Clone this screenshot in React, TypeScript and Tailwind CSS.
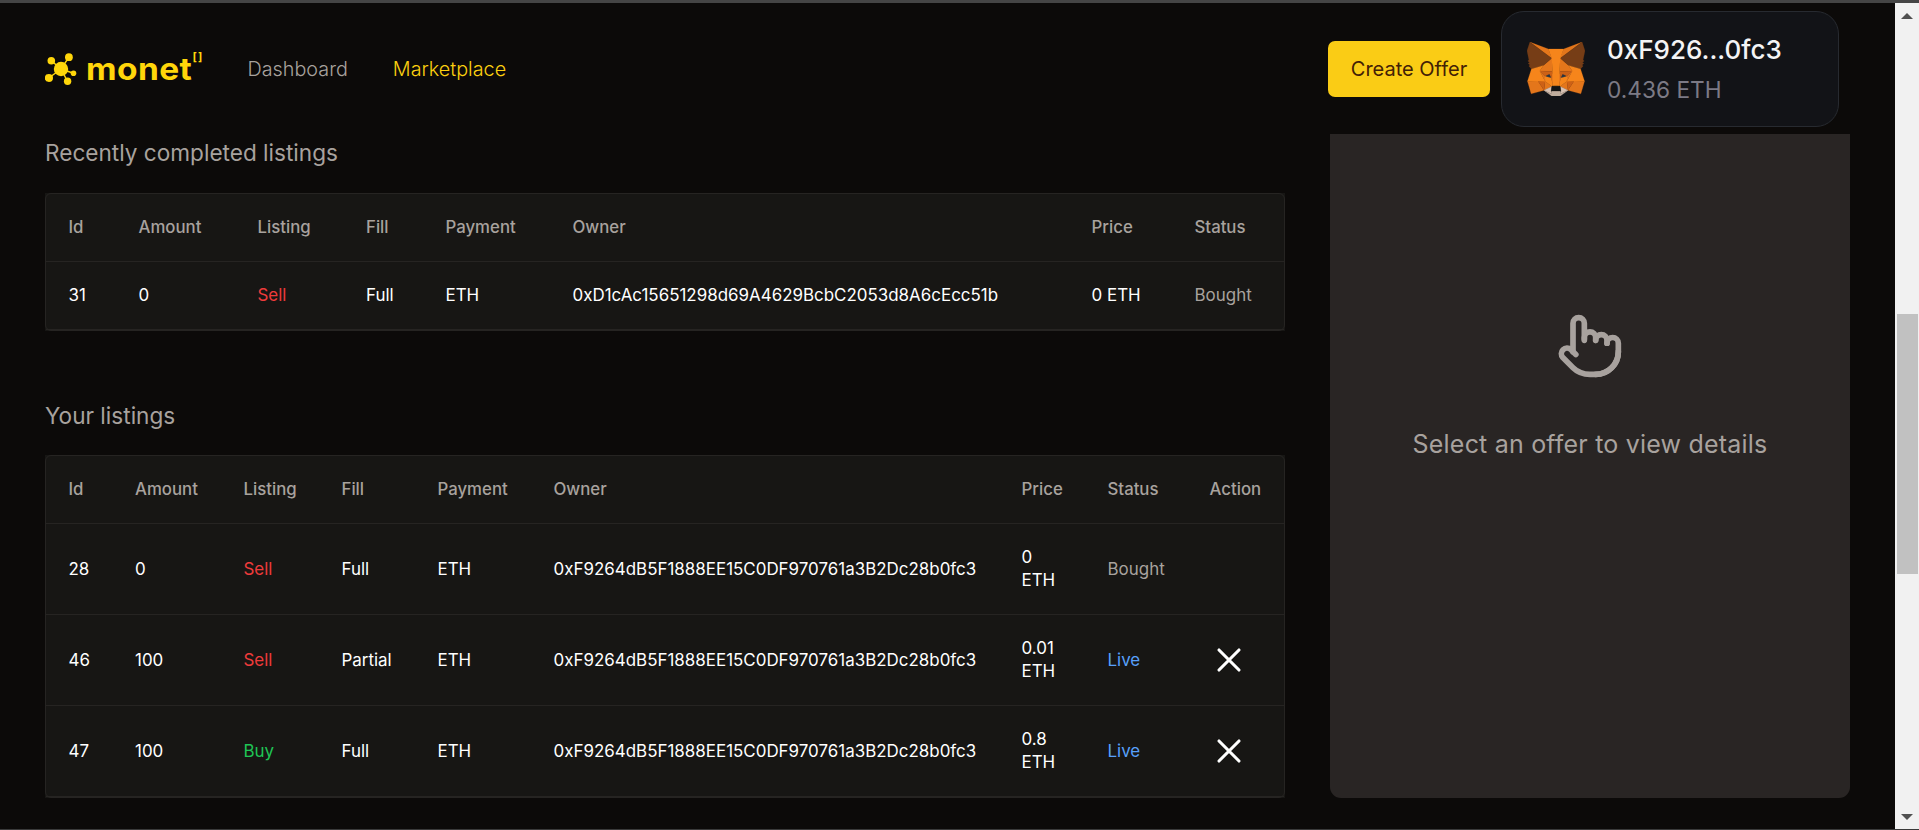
import type { ReactNode } from "react";
import { Pointer } from "lucide-react";

type Listing = {
  id: number;
  amount: number;
  side: "Sell" | "Buy";
  fill: string;
  owner: string;
  price: string;
  status: "Bought" | "Live";
};

const MY_ADDRESS = "0xF9264dB5F1888EE15C0DF970761a3B2Dc28b0fc3";

const completed: Listing[] = [
  { id: 31, amount: 0, side: "Sell", fill: "Full", owner: "0xD1cAc15651298d69A4629BcbC2053d8A6cEcc51b", price: "0", status: "Bought" },
];

const mine: Listing[] = [
  { id: 28, amount: 0, side: "Sell", fill: "Full", owner: MY_ADDRESS, price: "0", status: "Bought" },
  { id: 46, amount: 100, side: "Sell", fill: "Partial", owner: MY_ADDRESS, price: "0.01", status: "Live" },
  { id: 47, amount: 100, side: "Buy", fill: "Full", owner: MY_ADDRESS, price: "0.8", status: "Live" },
];

const foxFacets: [string, string[]][] = [
  ["#E2761B", ["274.1,35.5 174.6,109.4 193,65.8"]],
  ["#E4761B", [
    "44.4,35.5 143.1,110.1 125.6,65.8",
    "238.3,206.8 211.8,247.4 268.5,263 284.8,207.7",
    "33.9,207.7 50.1,263 106.8,247.4 80.3,206.8",
    "103.6,138.2 87.8,162.1 144.1,164.6 142.1,104.1",
    "214.9,138.2 175.9,103.4 174.6,164.6 230.8,162.1",
    "106.8,247.4 140.6,230.9 111.4,208.1",
    "177.9,230.9 211.8,247.4 207.1,208.1",
  ]],
  ["#D7C1B3", [
    "211.8,247.4 177.9,230.9 180.6,253 180.3,262.3",
    "106.8,247.4 138.3,262.3 138.1,253 140.6,230.9",
  ]],
  ["#233447", [
    "138.8,193.5 110.6,185.2 130.5,176.1",
    "179.7,193.5 188,176.1 208,185.2",
  ]],
  ["#CD6116", [
    "106.8,247.4 111.6,206.8 80.3,207.7",
    "207,206.8 211.8,247.4 238.3,207.7",
    "230.8,162.1 174.6,164.6 179.8,193.5 188.1,176.1 208.1,185.2",
    "110.6,185.2 130.6,176.1 138.8,193.5 144.1,164.6 87.8,162.1",
  ]],
  ["#E4751F", [
    "87.8,162.1 111.4,208.1 110.6,185.2",
    "208.1,185.2 207.1,208.1 230.8,162.1",
    "144.1,164.6 138.8,193.5 145.4,227.6 146.9,182.7",
    "174.6,164.6 171.9,182.6 173.1,227.6 179.8,193.5",
  ]],
  ["#F6851B", [
    "179.8,193.5 173.1,227.6 177.9,230.9 207.1,208.1 208.1,185.2",
    "110.6,185.2 111.4,208.1 140.6,230.9 145.4,227.6 138.8,193.5",
  ]],
  ["#C0AD9E", ["180.3,262.3 180.6,253 178.1,250.8 140.4,250.8 138.1,253 138.3,262.3 106.8,247.4 117.8,256.4 140.1,271.9 178.4,271.9 200.8,256.4 211.8,247.4"]],
  ["#161616", ["177.9,230.9 173.1,227.6 145.4,227.6 140.6,230.9 138.1,253 140.4,250.8 178.1,250.8 180.6,253"]],
  ["#763D16", [
    "278.3,114.2 286.8,73.4 274.1,35.5 177.9,106.9 214.9,138.2 267.2,153.5 278.8,140 273.8,136.4 281.8,129.1 275.6,124.3 283.6,118.2",
    "31.8,73.4 40.3,114.2 34.9,118.2 42.9,124.3 36.8,129.1 44.8,136.4 39.8,140 51.3,153.5 103.6,138.2 140.6,106.9 44.4,35.5",
  ]],
  ["#F6851B", [
    "267.2,153.5 214.9,138.2 230.8,162.1 207.1,208.1 238.3,207.7 284.8,207.7",
    "103.6,138.2 51.3,153.5 33.9,207.7 80.3,207.7 111.4,208.1 87.8,162.1",
    "174.6,164.6 177.9,106.9 193.1,65.8 125.6,65.8 140.6,106.9 144.1,164.6 145.3,182.8 145.4,227.6 173.1,227.6 173.3,182.8",
  ]],
];

function Fox() {
  return (
    <svg viewBox="31.8 35.5 255 236.4" className="h-[54px] w-[58px] shrink-0" aria-hidden="true">
      {foxFacets.map(([fill, shapes]) =>
        shapes.map((points) => (
          <polygon key={fill + points} points={points} fill={fill} stroke={fill} strokeLinejoin="round" />
        )),
      )}
    </svg>
  );
}

function Logo() {
  return (
    <a className="flex items-center text-[#ffd60a]">
      <svg viewBox="0 0 32 32" className="h-8 w-8 shrink-0" fill="currentColor" stroke="currentColor" aria-hidden="true">
        <path d="M16 16 6.3 7.7M16 16 23.8 4.3M16 16 3.8 25M16 16 28.5 20.3M16 16 22.6 28.5" strokeWidth="1.5" />
        <g stroke="none">
          <circle cx="16" cy="16" r="7.2" />
          <circle cx="6.3" cy="7.7" r="3.8" />
          <circle cx="23.9" cy="4.2" r="3.9" />
          <circle cx="3.9" cy="25" r="4.1" />
          <circle cx="28.5" cy="20.3" r="2.8" />
          <circle cx="22.6" cy="28.3" r="3.7" />
        </g>
      </svg>
      <span className="ml-[9px] w-[106.5px] origin-left scale-x-[1.08] text-[31px] leading-8 font-bold tracking-[0.4px]">monet</span>
      <span className="mb-[22px] text-[11.5px] leading-none font-bold tracking-[1.2px]">[]</span>
    </a>
  );
}

function CloseIcon() {
  return (
    <svg viewBox="0 0 24 24" className="-ml-[1px] size-10" fill="none" stroke="currentColor" strokeWidth="1.9" strokeLinecap="round">
      <path d="M6 18 18 6M6 6l12 12" />
    </svg>
  );
}

function Cell({ children, className = "" }: { children?: ReactNode; className?: string }) {
  return <div className={`flex items-center pl-[22.5px] ${className}`}>{children}</div>;
}

function ListingTable({ rows, columns, rowHeight, withAction = false }: {
  rows: Listing[];
  columns: string;
  rowHeight: string;
  withAction?: boolean;
}) {
  const headings = ["Id", "Amount", "Listing", "Fill", "Payment", "Owner", "Price", "Status"];
  if (withAction) headings.push("Action");
  return (
    <div className="w-[1240px] bg-[#171614]">
      <div className="rounded-md border border-[#262422] text-[16.95px] leading-[23px] text-white">
        <div className={`grid h-[68px] border-b border-[#262422] text-[16.8px] font-medium text-[#a8a29e] ${columns}`}>
          {headings.map((h) => <Cell key={h}>{h}</Cell>)}
        </div>
        {rows.map((row) => (
          <div key={row.id} className={`grid border-b border-[#262422] ${rowHeight} ${columns}`}>
            <Cell>{row.id}</Cell>
            <Cell>{row.amount}</Cell>
            <Cell className={row.side === "Sell" ? "text-[#ee3b3b]" : "text-[#1fc455]"}>{row.side}</Cell>
            <Cell>{row.fill}</Cell>
            <Cell>ETH</Cell>
            <Cell>{row.owner}</Cell>
            <Cell className="pr-[22px]">{row.price} ETH</Cell>
            <Cell className={row.status === "Live" ? "text-[#58a0fb]" : "text-[#a8a29e]"}>{row.status}</Cell>
            {withAction && <Cell>{row.status === "Live" && <CloseIcon />}</Cell>}
          </div>
        ))}
      </div>
    </div>
  );
}

export default function App() {
  return (
    <div className="flex h-[830px] w-[1919px] flex-col overflow-hidden border-t-3 border-b border-t-[#454545] border-b-[#3a3a3a] bg-[#0c0a09] font-['Inter',sans-serif]">
      <div className="flex min-h-0 flex-1">
        <div className="flex w-[1895px] flex-col pl-[45px]">
          <header className="flex h-[131px] shrink-0 items-center">
            <div className="flex w-[1283px] items-center">
              <div className="w-[202.5px]"><Logo /></div>
              <nav className="flex gap-[45px] pt-[2px] text-[19.8px] font-light">
                <a className="text-[#a8a29e]">Dashboard</a>
                <a className="text-[#fdd00f]">Marketplace</a>
              </nav>
            </div>
            <button className="h-14 w-[162px] rounded-[7px] bg-[#facc15] pt-[1px] text-[20px] text-[#422006]">Create Offer</button>
            <div className="ml-[11px] flex h-[116px] w-[338px] items-center rounded-[23px] border border-[#272a30] bg-[#121317] pl-[25px]">
              <Fox />
              <div className="ml-[22px] pt-[3px]">
                <div className="text-[26px] leading-9 font-medium text-[#f4f4f5]">0xF926...0fc3</div>
                <div className="mt-1 text-[22.7px] leading-9 text-[#7c7a85]">0.436 ETH</div>
              </div>
            </div>
          </header>
          <main className="flex">
            <section className="w-[1285px]">
              <h2 className="h-[59px] pt-[3px] text-[22.6px] leading-8 text-[#a8a29e]">Recently completed listings</h2>
              <ListingTable
                rows={completed}
                rowHeight="h-[68px]"
                columns="grid-cols-[70px_119px_108.5px_79.5px_127px_519px_103px_112px]"
              />
              <h2 className="h-[124px] pt-[69px] text-[22.6px] leading-8 text-[#a8a29e]">Your listings</h2>
              <ListingTable
                rows={mine}
                withAction
                rowHeight="h-[91px]"
                columns="grid-cols-[66.5px_108.5px_98px_96px_116px_468px_86px_102px_97px]"
              />
            </section>
            <aside className="flex h-[664px] w-[520px] flex-col items-center rounded-b-[11px] bg-[#292524] pt-[178px] text-[#a8a29e]">
              <Pointer className="size-[68px]" strokeWidth={2} />
              <p className="mt-[46px] text-[25px] leading-9 tracking-[0.2px]">Select an offer to view details</p>
            </aside>
          </main>
        </div>
        <div className="flex w-6 flex-col items-center bg-[#f1f1f1] pt-[10px] pb-[9px]">
          <svg viewBox="0 0 12 6" className="h-[6px] w-3 shrink-0" fill="#505050"><path d="M0 6 6 0l6 6z" /></svg>
          <div className="mt-[295px] mb-auto ml-[2px] h-[260px] w-[21px] shrink-0 self-start bg-[#c1c1c1]" />
          <svg viewBox="0 0 12 6" className="h-[6px] w-3 shrink-0" fill="#505050"><path d="M0 0h12L6 6z" /></svg>
        </div>
      </div>
    </div>
  );
}
